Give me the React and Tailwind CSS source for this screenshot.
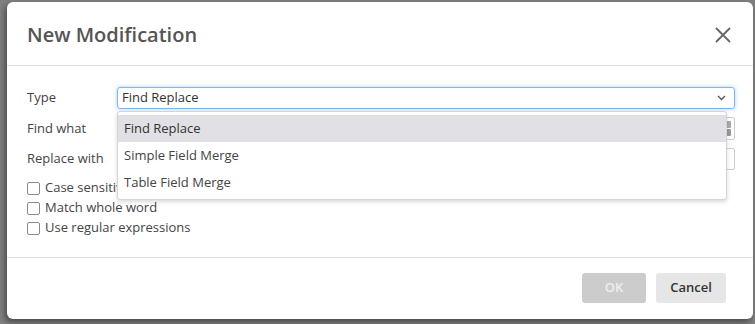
import React from "react";

function Checkbox({ label }) {
  return (
    <div className="flex items-center h-[20px]">
      <span className="w-[13px] h-[13px] border border-[#8a8a8a] rounded-[2px] bg-white mr-[5px] shrink-0" />
      <span>{label}</span>
    </div>
  );
}

export default function App() {
  return (
    <div
      className="w-[755px] h-[324px] bg-[#808080] pt-[2px] pl-[7px] overflow-hidden"
      style={{ fontFamily: '"Open Sans", "Liberation Sans", sans-serif' }}
    >
      <div className="w-[746px] h-[317px] bg-white rounded-[6px] shadow-[-2px_3px_6px_rgba(0,0,0,0.45)] flex flex-col text-[13px] text-[#444]">
        {/* Header */}
        <div className="h-[64px] flex items-center justify-between pl-[20px] pr-[22px] border-b border-[#e3e3e3] shrink-0">
          <h1 className="text-[20px] font-semibold text-[#555] leading-none pt-[3px]">New Modification</h1>
          <svg width="16" height="16" viewBox="0 0 16 16" className="mt-[2px]">
            <path d="M1.5 1.5 L14.5 14.5 M14.5 1.5 L1.5 14.5" stroke="#666" strokeWidth="1.8" strokeLinecap="round" />
          </svg>
        </div>
        {/* Body */}
        <div className="flex-1 pl-[20px] pr-[18px] pt-[21px] relative">
          <div className="grid grid-cols-[90px_1fr] items-center gap-y-[8px]">
            <div className="h-[22px] flex items-center">Type</div>
            <div className="h-[22px] border border-[#7fb6f0] rounded-[3px] shadow-[0_0_4px_rgba(100,160,240,0.5)] flex items-center justify-between pl-[4px] pr-[8px] text-[#333]">
              <span>Find Replace</span>
              <svg width="9" height="6" viewBox="0 0 9 6">
                <path d="M1 1 L4.5 4.5 L8 1" stroke="#555" strokeWidth="1.3" fill="none" />
              </svg>
            </div>
            <div className="h-[23px] flex items-center">Find what</div>
            <div className="h-[23px] border border-[#ccc] rounded-[2px] flex items-center justify-end pr-[3px]">
              <div className="flex flex-col gap-[1px]">
                <span className="w-[5px] h-[7px] bg-[#aaa] rounded-[1px]" />
                <span className="w-[5px] h-[7px] bg-[#999] rounded-[1px]" />
              </div>
            </div>
            <div className="h-[22px] flex items-center">Replace with</div>
            <div className="h-[22px] border border-[#ccc] rounded-[2px]" />
          </div>
          <div className="mt-[8px] flex flex-col text-[#444]">
            <Checkbox label="Case sensitive" />
            <Checkbox label="Match whole word" />
            <Checkbox label="Use regular expressions" />
          </div>
          {/* Dropdown overlay */}
          <div className="absolute left-[110px] top-[45px] w-[610px] bg-white border border-[#d4d4d4] rounded-[3px] shadow-[0_2px_4px_rgba(0,0,0,0.15)] py-[3px] text-[#444]">
            <div className="h-[27px] flex items-center pl-[6px] bg-[#e1e0e5] text-[#333]">Find Replace</div>
            <div className="h-[27px] flex items-center pl-[6px]">Simple Field Merge</div>
            <div className="h-[27px] flex items-center pl-[6px]">Table Field Merge</div>
          </div>
        </div>
        {/* Footer */}
        <div className="h-[62px] border-t border-[#e3e3e3] flex items-center justify-end gap-[10px] pr-[27px] pb-[2px] shrink-0">
          <button className="w-[64px] h-[30px] rounded-[3px] bg-[#cccccc] text-[#eeeeee] font-semibold">OK</button>
          <button className="w-[70px] h-[30px] rounded-[3px] bg-[#e6e6e6] text-[#333] font-semibold">Cancel</button>
        </div>
      </div>
    </div>
  );
}
